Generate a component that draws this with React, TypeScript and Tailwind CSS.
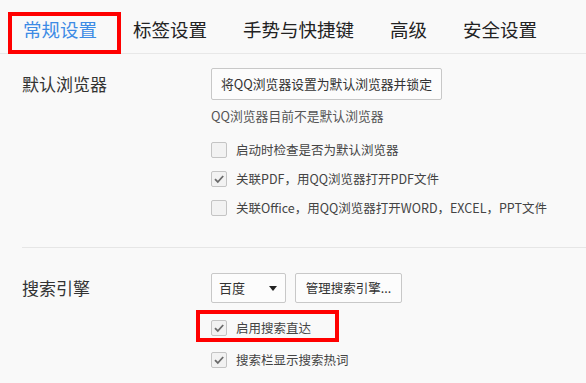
import React from "react";

const tabs = ["常规设置", "标签设置", "手势与快捷键", "高级", "安全设置"];

function Check({ checked, label }: { checked?: boolean; label: string }) {
  return (
    <div className="flex items-center h-[16px]">
      <span className="w-[16px] h-[16px] border border-[#c4c4c4] rounded-[2px] bg-[#f2f2f2] flex items-center justify-center">
        {checked && (
          <svg width="12" height="12" viewBox="0 0 12 12">
            <path d="M2 6.2 L4.8 9 L10.2 3" fill="none" stroke="#6b6b6b" strokeWidth="1.8" />
          </svg>
        )}
      </span>
      <span className="ml-[9px] text-[12.5px] text-[#444] leading-none whitespace-nowrap">{label}</span>
    </div>
  );
}

export default function App() {
  return (
    <div
      className="w-[586px] h-[383px] bg-[#f9f9f9] overflow-hidden relative text-[#333]"
      style={{ fontFamily: '"Noto Sans CJK SC", "Noto Sans", sans-serif' }}
    >
      {/* tabs */}
      <div className="h-[54px] border-b border-[#e8e8e8] flex pl-[5px] pt-[6px]">
        {tabs.map((t, i) => (
          <div
            key={t}
            className={
              "px-[18px] flex items-center text-[18.5px] leading-none " +
              (i === 0 ? "text-[#3d8be5]" : "text-[#222]")
            }
          >
            {t}
          </div>
        ))}
      </div>
      <div className="absolute left-[8px] top-[12px] w-[113px] h-[42px] border-4 border-[#ff0000]" />

      {/* default browser */}
      <div className="ml-[22px] border-b border-[#e6e6e6] pt-[14px] pb-[31px] flex">
        <div className="w-[189px] h-[32px] flex items-center text-[17px] text-[#333]">默认浏览器</div>
        <div className="flex flex-col">
          <button className="w-[231px] h-[32px] border border-[#c8c8c8] rounded-[2px] bg-[#fcfcfc] text-[12.8px] text-[#333] whitespace-nowrap">
            将QQ浏览器设置为默认浏览器并锁定
          </button>
          <div className="mt-[7px] text-[12.8px] leading-[18px] text-[#555]">QQ浏览器目前不是默认浏览器</div>
          <div className="mt-[17px] flex flex-col gap-[13px]">
            <Check label="启动时检查是否为默认浏览器" />
            <Check checked label="关联PDF，用QQ浏览器打开PDF文件" />
            <Check label="关联Office，用QQ浏览器打开WORD，EXCEL，PPT文件" />
          </div>
        </div>
      </div>

      {/* search engine */}
      <div className="ml-[22px] pt-[25px] flex">
        <div className="w-[189px] h-[30px] flex items-center text-[17px] text-[#333]">搜索引擎</div>
        <div className="flex flex-col">
          <div className="flex gap-[9px]">
            <div className="w-[75px] h-[30px] border border-[#c8c8c8] rounded-[2px] bg-[#fcfcfc] flex items-center justify-between pl-[7px] pr-[8px] text-[13px]">
              <span>百度</span>
              <svg width="8" height="5" viewBox="0 0 8 5">
                <path d="M0 0 H8 L4 5 Z" fill="#222" />
              </svg>
            </div>
            <button className="w-[107px] h-[30px] border border-[#c8c8c8] rounded-[2px] bg-[#fcfcfc] text-[12.5px] text-[#333]">
              管理搜索引擎...
            </button>
          </div>
          <div className="mt-[17px] flex flex-col gap-[16px]">
            <Check checked label="启用搜索直达" />
            <Check checked label="搜索栏显示搜索热词" />
          </div>
        </div>
      </div>
      <div className="absolute left-[196px] top-[310px] w-[143px] h-[32px] border-4 border-[#ff0000]" />
    </div>
  );
}
